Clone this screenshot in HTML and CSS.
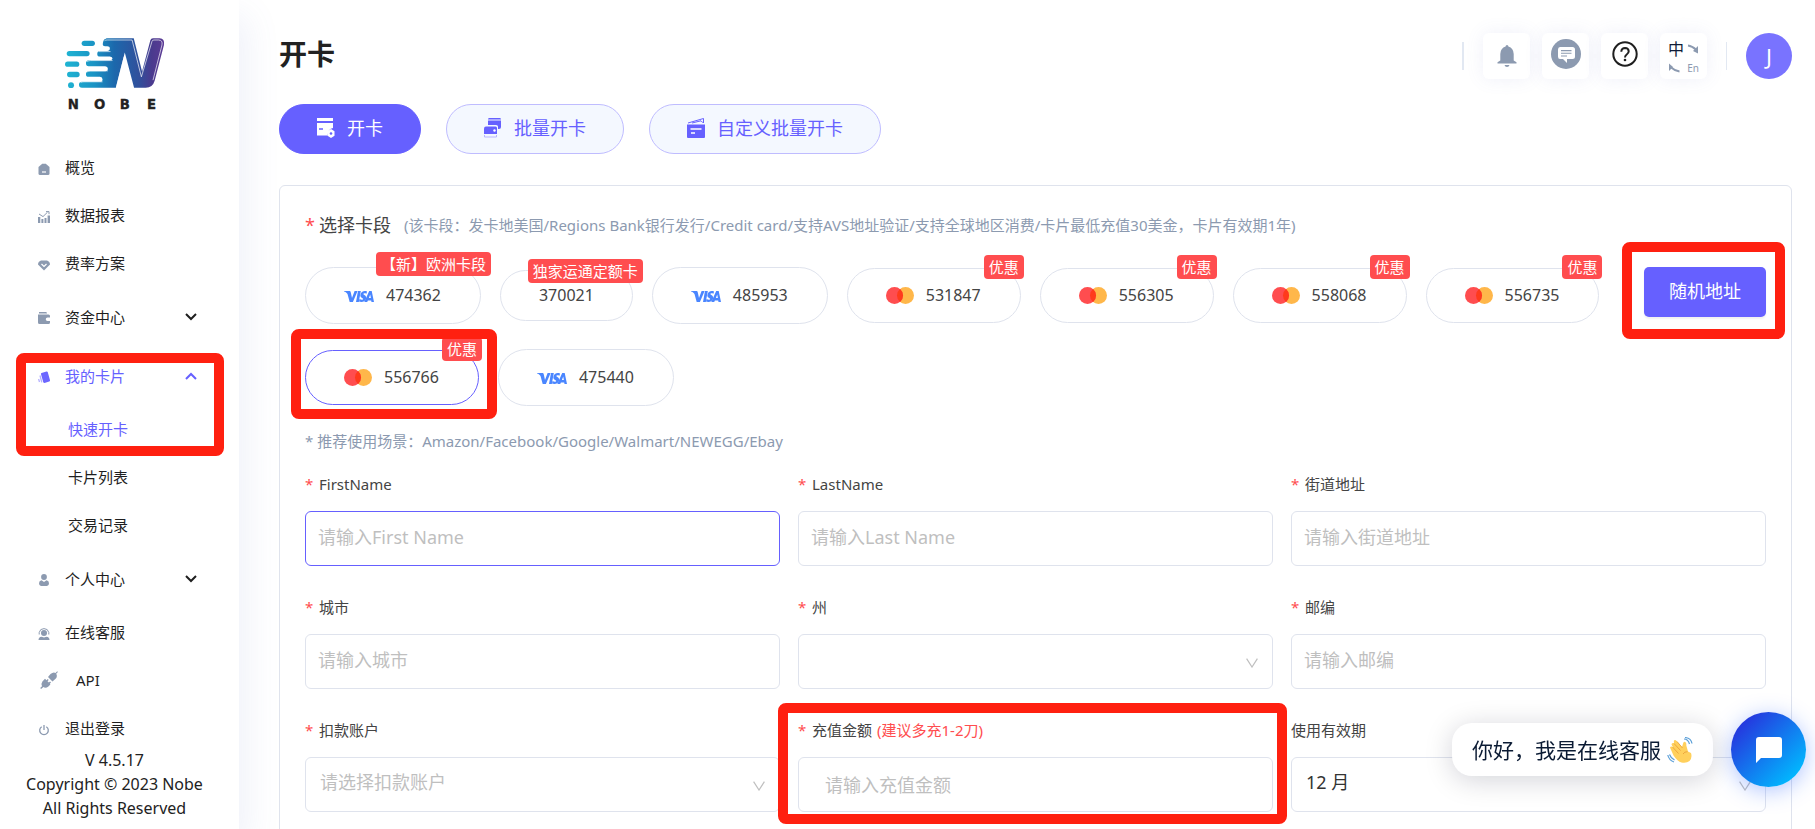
FILE: index.html
```html
<!DOCTYPE html>
<html lang="zh-CN">
<head>
<meta charset="utf-8">
<title>开卡</title>
<link rel="stylesheet" href="styles.css">
</head>
<body>
<svg class="defs" aria-hidden="true">
  <symbol id="visa" viewBox="0 0 30 12">
    <g fill="#4a86ff">
      <path d="M0 .6h5.2c.9 0 1.400.4 1.600 1.300L8 7.400 10.600.6h3L8.900 11.500H5.700L3.500 3.500C2.900 2.200 1.500 1.200 0 .900z"/>
      <path d="M14 .6h2.800l-2 10.900H12z"/>
      <path d="M23 .9l-.5 2.400c-1.600-.7-3.100-.6-3.200.1-.1.900 3.300 1.200 2.900 4.200-.4 3.500-4.200 4.600-7.200 3.500l.5-2.500c1.800.9 3.600.8 3.700-.1.200-1.100-3.200-1.300-2.800-4.100C16.800 1 20.100-.1 23 .9z"/>
      <path fill-rule="evenodd" d="M25.200.6h2.500L30 11.500h-2.500l-.3-1.600h-3.300l-.7 1.600h-2.900zm1 3.500l-1.300 3.500h2z"/>
    </g>
  </symbol>
  <symbol id="mc" viewBox="0 0 28 18">
    <circle cx="19.500" cy="9" r="8.500" fill="#ffb74a"/>
    <circle cx="8.500" cy="9" r="8.500" fill="#ff4d4f"/>
    <path d="M14 2.500a8.500 8.500 0 0 1 0 13 8.500 8.500 0 0 1 0-13z" fill="#ff3a1c"/>
  </symbol>
  <symbol id="down" viewBox="0 0 12 8"><path d="M1 1l5 5 5-5" fill="none" stroke="currentColor" stroke-width="2"/></symbol>
  <symbol id="up" viewBox="0 0 12 8"><path d="M1 7l5-5 5 5" fill="none" stroke="currentColor" stroke-width="2"/></symbol>
  <symbol id="arrow" viewBox="0 0 12 10"><path d="M.6.700L6 9 11.400.7" fill="none" stroke="#bfbfbf" stroke-width="1.200"/></symbol>
</svg>

<div class="shell">
  <aside class="sidebar">
    <svg class="logo" viewBox="190 108 304 232" role="img" aria-label="NOBE">
      <defs>
        <linearGradient id="lg" gradientUnits="userSpaceOnUse" x1="193" y1="0" x2="490" y2="0">
          <stop offset="0" stop-color="#1fb5d3"/><stop offset=".3" stop-color="#1a93c4"/><stop offset=".5" stop-color="#1c68ac"/><stop offset=".75" stop-color="#30509c"/><stop offset=".88" stop-color="#4a3a8e"/><stop offset="1" stop-color="#5b3a94"/>
        </linearGradient>
      </defs>
      <g fill="url(#lg)">
        <rect x="243" y="119" width="40" height="16" rx="8"/>
        <rect x="198" y="150" width="69" height="16" rx="8"/>
        <rect x="193" y="182" width="43" height="16" rx="8"/>
        <rect x="199" y="213" width="38" height="16" rx="8"/>
        <circle cx="211" cy="253" r="9"/>
        <path d="M317 112H400L425 212 450 118q2-6 8-6h20q16 1 13 20L463 240q-6 21-27 21H401L373 155 346 261H244q-9 0-9-9t9-9h54q8 0 8-7t-8-8H264q-8 0-8-8t8-9h50q8 0 8-7t-8-8H264q-8 0-8-9 0-8 9-9h63q8 0 8-5t-8-6H298q-8 0-8-8 0-9 8-9h22q8 0 8-7t-8-7h-6q-9 0-7-10 2-13 10-13z"/>
      </g>
      <path d="M312 119q3-2 8-2H395L423 228 455 121q1-4 6-4h14q13 1 10 15L458 238M371 168L348 259M294 152h36M260 182q4-3 10-3h66M260 213q4-3 10-3h52M240 245q4-2 10-2h56" fill="none" stroke="#fff" stroke-width="2"/>
      <text x="201 280 358 440" y="325" class="logo-text">NOBE</text>
    </svg>

    <nav class="nav">
      <a class="item" href="#"><svg class="ico" viewBox="0 0 12 12"><path d="M4.200.7h3.600L11.500 4v6.500q0 1.500-1.500 1.500H2Q.5 12 .5 10.500V4z" fill="#8c9ab0"/><path d="M4 9h4" stroke="#fff" stroke-width="1.200"/></svg>概览</a>
      <a class="item" href="#"><svg class="ico" viewBox="0 0 12 12"><g fill="#8c9ab0"><path d="M0 6h2.300v6H0zM3.400 8h2v4h-2zM6.500 7h2v5h-2zM9.600 4.500H12V12H9.600z"/></g><path d="M1 3l4 2.600L9.500 1.200M8 .6h3v2.600" fill="none" stroke="#8c9ab0"/></svg>数据报表</a>
      <a class="item" href="#"><svg class="ico" viewBox="0 0 12 12"><path d="M3 1.500h6q3 1.200 3 4L6 11.500 0 5.500q0-2.800 3-4z" fill="#8c9ab0"/><path d="M3.500 5L6 7.500 8.500 5" fill="none" stroke="#fff" stroke-width="1.200"/></svg>费率方案</a>
      <button class="item sub" type="button"><svg class="ico" viewBox="0 0 12 12"><path d="M1 0h7q1 0 1 1.500H1zM0 2.500h10.500Q12 2.500 12 4v1.500H9.500a1.500 1.500 0 0 0 0 3.500H12v1.500q0 1.500-1.500 1.500h-9Q0 12 0 10.500z" fill="#8c9ab0"/></svg>资金中心<svg class="chev"><use href="#down"/></svg></button>
      <div class="group">
        <button class="item sub on" type="button"><svg class="ico" viewBox="0 0 12 12"><path d="M3.500 2L8.500.6q1-.2 1.300.6L12 9.200q.2 1-.8 1.300L6.500 12q-1 0-1.300-1L3 3.200q-.1-1 .5-1.200z" fill="#6c66ff"/><path d="M2 4.500L3.800 11.400M.6 8l.9 3" stroke="#b3afff" stroke-width="1.300"/></svg>我的卡片<svg class="chev"><use href="#up"/></svg></button>
        <a class="item child on" href="#">快速开卡</a>
        <span class="mark mark-nav"></span>
      </div>
      <a class="item child" href="#">卡片列表</a>
      <a class="item child" href="#">交易记录</a>
      <button class="item sub" type="button"><svg class="ico" viewBox="0 0 12 12"><circle cx="6" cy="3" r="2.900" fill="#8c9ab0"/><path d="M3.500 6.300L6 8l2.500-1.700q2.500.4 2.500 3 0 2.700-2 2.700H3q-2 0-2-2.700 0-2.600 2.500-3z" fill="#8c9ab0"/></svg>个人中心<svg class="chev"><use href="#down"/></svg></button>
      <a class="item" href="#"><svg class="ico" viewBox="0 0 12 12"><circle cx="6" cy="5" r="3" fill="#8c9ab0"/><path d="M1.200 6.500V4.500Q2 .6 6 .6t4.800 3.900v2" fill="none" stroke="#8c9ab0"/><path d="M.5 12q0-3 3-3.200L6 9.500l2.500-.7q3 .2 3 3.200z" fill="#8c9ab0"/></svg>在线客服</a>
      <a class="item api" href="#"><svg class="ico-lg" viewBox="0 0 18 18"><g fill="#8c9ab0"><path d="M8 6L10.500 3Q13.500.6 15.500 2L17.200.2l.7.700-1.700 1.800q1.600 2.700-.6 5.100L12.500 10.500z"/><path d="M5 7.800l1.500 1.400 1.200-1.200 1 1-1.200 1.200 1.400 1.400L10 10.500l1 1-1.200 1.200.6.800-2 2q-2.800 2-5 .6L1.100 18l-.9-.9L2 15.300q-1.300-2.300.4-4.800z"/></g></svg>API</a>
      <a class="item" href="#"><svg class="ico" viewBox="0 0 12 12"><path d="M3.700 2.700a4.300 4.300 0 1 0 4.600 0M6 1v5" fill="none" stroke="#8c9ab0" stroke-width="1.300"/></svg>退出登录</a>
    </nav>
    <p class="copy">V 4.5.17<br>Copyright © 2023 Nobe<br>All Rights Reserved</p>
  </aside>

  <main class="main">
    <header class="top">
      <h1>开卡</h1>
      <div class="tools">
        <span class="bar"></span>
        <button class="tile" type="button" aria-label="通知"><svg width="20" height="22" viewBox="0 0 20 22"><path d="M10 0q1.400 0 1.400 1.500Q16.500 3 16.700 9v6.500l2.800 1.700v1.300H.5v-1.300l2.800-1.700V9q.2-6 5.300-7.500Q8.600 0 10 0zM7.500 20h5q-.5 2-2.500 2t-2.500-2z" fill="#8c9ab0"/></svg></button>
        <button class="tile tall" type="button" aria-label="消息"><svg width="30" height="30" viewBox="0 0 30 30"><circle cx="15" cy="15" r="15" fill="#8c9ab0"/><path d="M9 8h12.500Q24 8 24 10.500v7q0 2.500-2.500 2.500H16v4l-4-4H9q-2 0-2-2.500v-7Q7 8 9 8z" fill="#fff"/><path d="M10 11.600h10.500M10 14.300h10.500M10 17h6" stroke="#8c9ab0" stroke-width="1.100"/></svg></button>
        <button class="tile tall" type="button" aria-label="帮助"><svg width="26" height="26" viewBox="0 0 26 26" fill="none" stroke="#1f1f1f" stroke-width="2"><circle cx="13" cy="13" r="11.700"/><path d="M9.300 10.700q.2-3.700 3.800-3.700 3.500.1 3.600 3.300 0 1.900-2 3.200-1.700 1.100-1.700 3"/><circle cx="13" cy="19" r="1.300" fill="#1f1f1f" stroke="none"/></svg></button>
        <button class="tile lang" type="button" aria-label="语言"><span class="zh">中</span><svg width="12" height="10" viewBox="0 0 12 10"><path d="M1 1.500Q5 2 9.500 6" fill="none" stroke="#8c9ab0" stroke-width="2"/><path d="M11 2v7.500L6 7z" fill="#8c9ab0"/></svg><svg width="12" height="10" viewBox="0 0 12 10"><path d="M11.500 8.500Q7 8 2.500 4" fill="none" stroke="#8c9ab0" stroke-width="2"/><path d="M1 8V.5L5 4z" fill="#8c9ab0"/></svg><span class="en">En</span></button>
        <span class="bar last"></span>
        <button class="avatar" type="button">J</button>
      </div>
    </header>

    <div class="tabs">
      <button class="tab active" type="button"><svg width="18" height="22" viewBox="0 -2 18 22"><path d="M0-1h16v3H0zM0 4h16v5q-5 .5-5.500 7.500H0z" fill="#fff"/><path d="M2 10h4" stroke="#6660ff" stroke-width="1.500"/><path d="M14 10l3.500 2.200v4.600L14 19l-3.500-2.200v-4.600z" fill="#fff"/><circle cx="14" cy="14.500" r="1.300" fill="#6660ff"/></svg>开卡</button>
      <button class="tab" type="button"><svg width="18" height="22" viewBox="0 -2 18 22"><g fill="#6660ff"><path d="M5-1h11q1 0 1 1.500H4Q4-1 5-1zM4 1.600h13V8q0 2-2 2h-1V7.500Q14 6 12 6H4z"/><path d="M2 7.500h9.500Q13 7.500 13 9v6H0V9.500q0-2 2-2z"/></g><path d="M.5 16v2h12v-2" fill="none" stroke="#b9b6ff"/><circle cx="10.500" cy="11.500" r="1.200" fill="#fff"/></svg>批量开卡</button>
      <button class="tab" type="button"><svg width="18" height="22" viewBox="0 -2 18 22"><path d="M1 4L16.500-.5V4M5 4l9-2.200 2 2" fill="none" stroke="#6660ff"/><path d="M0 5.500h18V18q0 1-1 1H1q-1 0-1-1z" fill="#6660ff"/><path d="M3.500 10h11M4 14h4" stroke="#fff" stroke-width="1.300"/></svg>自定义批量开卡</button>
    </div>

    <form class="panel">
      <div class="seg"><span class="seg-title"><i class="req">*</i>选择卡段</span><span class="note">(该卡段：发卡地美国/Regions Bank银行发行/Credit card/支持AVS地址验证/支持全球地区消费/卡片最低充值30美金，卡片有效期1年)</span></div>
      <div class="cards">
        <div class="pills">
          <button class="pill" type="button"><svg class="visa"><use href="#visa"/></svg>474362<span class="badge wide">【新】欧洲卡段</span></button>
          <button class="pill" type="button">370021<span class="badge low">独家运通定额卡</span></button>
          <button class="pill" type="button"><svg class="visa"><use href="#visa"/></svg>485953</button>
          <button class="pill" type="button"><svg class="mc"><use href="#mc"/></svg>531847<span class="badge">优惠</span></button>
          <button class="pill" type="button"><svg class="mc"><use href="#mc"/></svg>556305<span class="badge">优惠</span></button>
          <button class="pill" type="button"><svg class="mc"><use href="#mc"/></svg>558068<span class="badge">优惠</span></button>
          <button class="pill" type="button"><svg class="mc"><use href="#mc"/></svg>556735<span class="badge">优惠</span></button>
          <button class="pill selected" type="button"><svg class="mc"><use href="#mc"/></svg>556766<span class="badge">优惠</span><span class="mark mark-pill"></span></button>
          <button class="pill" type="button"><svg class="visa"><use href="#visa"/></svg>475440</button>
        </div>
        <div class="random-wrap"><button class="random" type="button">随机地址</button><span class="mark mark-random"></span></div>
      </div>
      <p class="hint">* 推荐使用场景：Amazon/Facebook/Google/Walmart/NEWEGG/Ebay</p>

      <div class="grid">
        <div class="field"><label for="fn"><i class="req">*</i>FirstName</label><input class="active" id="fn" placeholder="请输入First Name"></div>
        <div class="field"><label for="ln"><i class="req">*</i>LastName</label><input id="ln" placeholder="请输入Last Name"></div>
        <div class="field"><label for="st"><i class="req">*</i>街道地址</label><input id="st" placeholder="请输入街道地址"></div>
        <div class="field"><label for="city"><i class="req">*</i>城市</label><input id="city" placeholder="请输入城市"></div>
        <div class="field"><label for="state"><i class="req">*</i>州</label><div class="pick"><select id="state"><option></option></select><svg class="arrow"><use href="#arrow"/></svg></div></div>
        <div class="field"><label for="zip"><i class="req">*</i>邮编</label><input id="zip" placeholder="请输入邮编"></div>
        <div class="field"><label for="acc"><i class="req">*</i>扣款账户</label><div class="pick"><select id="acc" class="empty"><option>请选择扣款账户</option></select><svg class="arrow"><use href="#arrow"/></svg></div></div>
        <div class="field"><label for="amt"><i class="req">*</i>充值金额<span class="tip">(建议多充1-2刀)</span></label><input id="amt" class="number" placeholder="请输入充值金额"><span class="mark mark-field"></span></div>
        <div class="field"><label for="exp">使用有效期</label><div class="pick"><select id="exp"><option>12 月</option></select><svg class="arrow"><use href="#arrow"/></svg></div></div>
      </div>
    </form>
  </main>
</div>

<div class="chat">
  <div class="bubble">你好，我是在线客服<svg width="26" height="26" viewBox="0 0 26 26" role="img" aria-label="挥手"><path d="M3 10.500q1-2 3 0L4.500 7.500q.3-2.300 2.500-1.200L6.800 4q1-2 3 .2L15 10l1.200-4q1-2.200 2.600-.6.700.8.500 3L21 14.500l3 1.500q1.500 5-1.500 8-3 2.500-8 1.500-4-1-8-7z" fill="#ffd05c"/><path d="M5.500 10l6 6.500M7 6.500l6.500 7M10 4.500l5.500 6.500M16 17q1.500-2.500 4.500-2.300" fill="none" stroke="#e9a23b" stroke-width=".9"/><path d="M17 2q4 0 5.500 5M18 .5q6 .5 7 6M.8 18q1 5 6.200 7M2.500 17.500q1.200 3.500 5 5.500" fill="none" stroke="#5a9fd8" stroke-width="1.200"/></svg></div>
  <button class="chat-btn" type="button" aria-label="在线客服"><svg width="26" height="26" viewBox="0 0 26 26"><path d="M3 0h20q3 0 3 3v15q0 3-3 3H5l-5 5V3q0-3 3-3z" fill="#fff"/></svg></button>
</div>
</body>
</html>
```

FILE: styles.css
```css
* { box-sizing: border-box; }

body {
  margin: 0;
  background: #fff;
  color: #222;
  font: 15px/24px "Noto Sans", "Noto Sans CJK SC", sans-serif;
}

button, input, select { font: inherit; color: inherit; }
button { cursor: pointer; padding: 0; border: 0; background: none; }
svg { flex: none; }
.defs { position: absolute; width: 0; height: 0; }

.shell { display: flex; height: 100vh; overflow: hidden; }

/* Sidebar */
.sidebar {
  flex: none;
  width: 239px;
  padding-top: 37px;
  background: #fff;
  box-shadow: 8px 16px 32px rgba(96, 120, 200, .1);
}
.logo { display: block; width: 101px; height: 77px; margin-left: 64px; overflow: visible; }
.logo-text { font: bold 40px "DejaVu Sans", sans-serif; fill: #222; stroke: #222; stroke-width: 1px; }

.nav { display: flex; flex-direction: column; padding-top: 29px; }
.item {
  display: flex;
  align-items: center;
  width: 100%;
  height: 48px;
  padding: 0 42px 0 38px;
  gap: 15px;
  color: #1f1f1f;
  text-decoration: none;
}
.item.sub { height: 59px; }
.item.child { padding-left: 68px; }
.item.api { padding-left: 40px; gap: 18px; }
.item.on { color: #6660ff; }
.ico { width: 12px; height: 12px; margin-top: 3px; }
.ico-lg { width: 18px; height: 18px; }
.chev { width: 12px; height: 8px; margin-left: auto; }
.group { position: relative; }
.copy { margin: -4px 0 0; padding-right: 10px; font-size: 16px; text-align: center; }

/* Highlight frames */
.mark {
  position: absolute;
  border: 10px solid #ff2010;
  border-radius: 8px;
  pointer-events: none;
}
.mark-nav { inset: 7px 15px -3px 16px; }
.mark-pill { inset: -22px -19px -15px -15px; }
.mark-random { inset: -25px -19px -22px -22px; }
.mark-field { inset: -15px -14px -12px -20px; z-index: 1; }

/* Main */
.main { flex: 1; min-width: 0; padding: 33px 23px 0 40px; }
.top { display: flex; justify-content: space-between; height: 46px; }
h1 { margin: 0; font-size: 28px; line-height: 42px; }
.tools { display: flex; align-items: center; gap: 12px; }
.bar { width: 2px; height: 28px; margin: 0 7px; background: #e2e8f2; }
.bar.last { width: 1px; }
.tile {
  display: flex;
  align-items: center;
  justify-content: center;
  width: 47px;
  height: 46px;
  border-radius: 6px;
  background: #fff;
  box-shadow: 0 0 18px rgba(96, 110, 200, .1);
}
.tile.tall { padding-bottom: 5px; }
.tile.lang {
  display: grid;
  grid-template-columns: 16px 12px;
  gap: 0 3px;
  padding: 0 7px;
  align-content: center;
  align-items: center;
}
.zh { font-size: 16px; line-height: 24px; color: #101c38; }
.en { font-size: 10px; line-height: 14px; color: #8c9ab0; }
.avatar {
  width: 46px;
  height: 46px;
  border-radius: 50%;
  background: #7973ff;
  color: #fff;
  font-size: 22px;
}

.tabs { display: flex; gap: 25px; margin-top: 25px; }
.tab {
  display: flex;
  align-items: center;
  gap: 12px;
  height: 50px;
  padding: 0 37px 2px;
  border: 1px solid #bfbcff;
  border-radius: 25px;
  background: #f4f8ff;
  color: #6660ff;
  font-size: 18px;
}
.tab.active { border-color: #6660ff; background: #6660ff; color: #fff; }

.panel {
  height: 100vh;
  margin-top: 31px;
  padding: 25px;
  border: 1px solid #dfe3ed;
  border-radius: 6px;
}
.seg { display: flex; align-items: center; gap: 13px; line-height: 28px; }
.seg-title { font-size: 18px; color: #444; white-space: nowrap; }
.req {
  display: inline-block;
  width: 14px;
  color: #ff4d4f;
  font-style: normal;
}
.note, .hint { color: #8c9ab0; }

.cards { display: flex; align-items: flex-start; margin-top: 28px; }
.pills { display: flex; flex: 1; flex-wrap: wrap; align-items: center; gap: 25px 19px; }
.pill {
  position: relative;
  display: flex;
  align-items: center;
  gap: 12px;
  padding: 12px 38px;
  border: 1px solid #dfe3ed;
  border-radius: 29px;
  color: #444;
  font-size: 16px;
  line-height: 25px;
}
.pill:has(svg) { padding: 12px 39px 12px 38px; }
.pill.selected { border-color: #6660ff; }
.visa { width: 30px; height: 31px; padding-top: 2px; }
.mc { width: 28px; height: 29px; }
.badge {
  position: absolute;
  top: -14px;
  right: -4px;
  padding: 0 5px;
  border-radius: 4px;
  background: #ff4d4f;
  color: #fff;
  font-size: 15px;
  line-height: 24px;
  white-space: nowrap;
}
.badge.wide { top: -16px; right: -11px; }
.badge.low { top: -12px; right: -11px; }
.random-wrap { position: relative; }
.random {
  height: 50px;
  padding: 0 25px 2px;
  border-radius: 5px;
  background: #6660ff;
  box-shadow: 0 2px 2px rgba(0, 0, 0, .06);
  color: #fff;
  font-size: 18px;
}
.hint { margin: 23px 0 19px; }

.grid { display: grid; grid-template-columns: repeat(3, minmax(0, 1fr)); gap: 29px 18px; }
.field { position: relative; display: flex; flex-direction: column; gap: 15px; color: #444; }
.tip { margin-left: 5px; color: #ff4d4f; }
input, select {
  width: 100%;
  height: 55px;
  padding: 0 12px 4px;
  border: 1px solid #dfe3ed;
  border-radius: 6px;
  outline: 0;
  background: #fff;
  color: #333;
  font-size: 18px;
}
input.active { border-color: #6660ff; }
input.number { padding: 0 26px; }
input::placeholder { color: #bfbfbf; opacity: 1; }
select { padding-left: 14px; padding-bottom: 6px; appearance: none; }
select.empty { color: #bfbfbf; }
.pick { position: relative; height: 55px; }
.arrow { position: absolute; top: 24px; right: 15px; width: 12px; height: 10px; }

/* Chat widget */
.chat {
  position: fixed;
  z-index: 2;
  right: 9px;
  bottom: 42px;
  display: flex;
  align-items: center;
  gap: 18px;
}
.bubble {
  display: flex;
  align-items: center;
  gap: 6px;
  height: 53px;
  padding: 0 20px;
  border-radius: 20px;
  background: #fff;
  box-shadow: 0 4px 28px rgba(0, 10, 40, .18);
  color: #0a1a33;
  font-size: 21px;
}
.chat-btn {
  display: flex;
  align-items: center;
  justify-content: center;
  width: 75px;
  height: 75px;
  border-radius: 50%;
  background: linear-gradient(135deg, #2a27da 5%, #00bbff 88%);
  box-shadow: 0 4px 22px rgba(30, 90, 255, .35);
}
```
